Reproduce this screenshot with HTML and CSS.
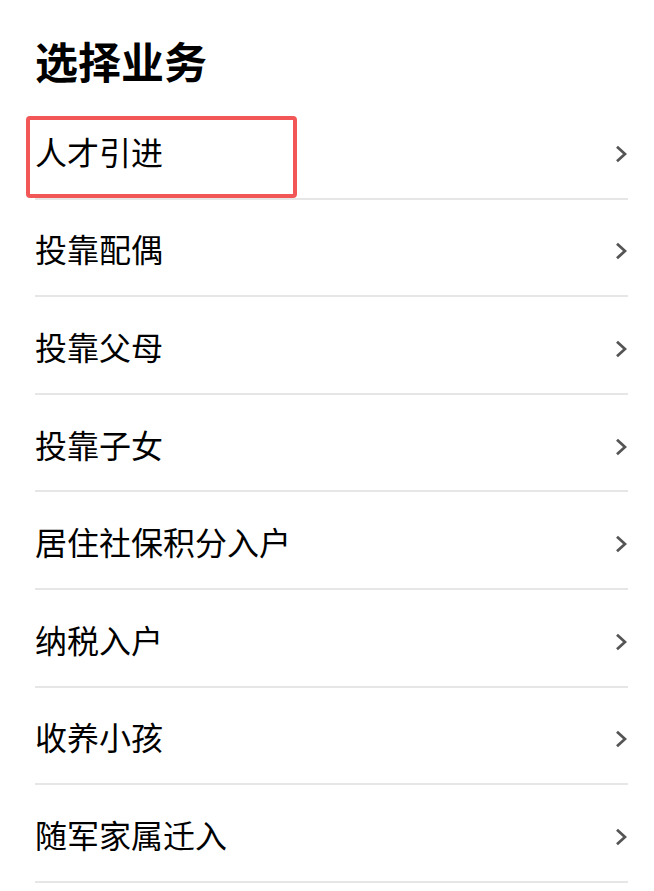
FILE: index.html
```html
<!DOCTYPE html>
<html lang="zh-CN">
<head>
  <meta charset="UTF-8">
  <title>选择业务</title>
  <link rel="stylesheet" href="styles.css">
</head>
<body>
  <div class="page">
    <h1 class="title">选择业务</h1>

    <ul class="biz-list">
      <li class="biz-item is-marked">
        <span class="biz-name">人才引进</span>
        <svg class="chevron" viewBox="0 0 12 18"><polyline points="2,1.8 10,9 2,16.2"/></svg>
        <div class="mark"></div>
      </li>
      <li class="biz-item">
        <span class="biz-name">投靠配偶</span>
        <svg class="chevron" viewBox="0 0 12 18"><polyline points="2,1.8 10,9 2,16.2"/></svg>
      </li>
      <li class="biz-item">
        <span class="biz-name">投靠父母</span>
        <svg class="chevron" viewBox="0 0 12 18"><polyline points="2,1.8 10,9 2,16.2"/></svg>
      </li>
      <li class="biz-item">
        <span class="biz-name">投靠子女</span>
        <svg class="chevron" viewBox="0 0 12 18"><polyline points="2,1.8 10,9 2,16.2"/></svg>
      </li>
      <li class="biz-item">
        <span class="biz-name">居住社保积分入户</span>
        <svg class="chevron" viewBox="0 0 12 18"><polyline points="2,1.8 10,9 2,16.2"/></svg>
      </li>
      <li class="biz-item">
        <span class="biz-name">纳税入户</span>
        <svg class="chevron" viewBox="0 0 12 18"><polyline points="2,1.8 10,9 2,16.2"/></svg>
      </li>
      <li class="biz-item">
        <span class="biz-name">收养小孩</span>
        <svg class="chevron" viewBox="0 0 12 18"><polyline points="2,1.8 10,9 2,16.2"/></svg>
      </li>
      <li class="biz-item">
        <span class="biz-name">随军家属迁入</span>
        <svg class="chevron" viewBox="0 0 12 18"><polyline points="2,1.8 10,9 2,16.2"/></svg>
      </li>
    </ul>
  </div>
</body>
</html>
```

FILE: styles.css
```css
body {
  margin: 0;
  background: #fff;
  color: #000;
  font-family: "Noto Sans CJK SC", "Noto Sans", sans-serif;
}

.page {
  padding: 0 26px 0 35px;
}

.title {
  margin: 0;
  padding-top: 20px;
  height: 82px;
  line-height: 80px;
  font-size: 43px;
  font-weight: 700;
}

.biz-list {
  list-style: none;
  margin: 0;
  padding: 0;
}

.biz-item {
  position: relative;
  box-sizing: border-box;
  height: 97.6px;
  display: flex;
  align-items: center;
  justify-content: space-between;
  padding: 2px 1px 0 0;
  border-bottom: 2px solid #e6e6e6;
}

.biz-name {
  font-size: 32px;
  line-height: 1;
}

.chevron {
  width: 12px;
  height: 18px;
  margin-top: 6px;
  fill: none;
  stroke: #555;
  stroke-width: 2.8;
}

.mark {
  position: absolute;
  left: -9px;
  top: 14px;
  width: 271px;
  height: 82px;
  box-sizing: border-box;
  border: 4px solid #f25656;
  border-radius: 4px;
}
```
